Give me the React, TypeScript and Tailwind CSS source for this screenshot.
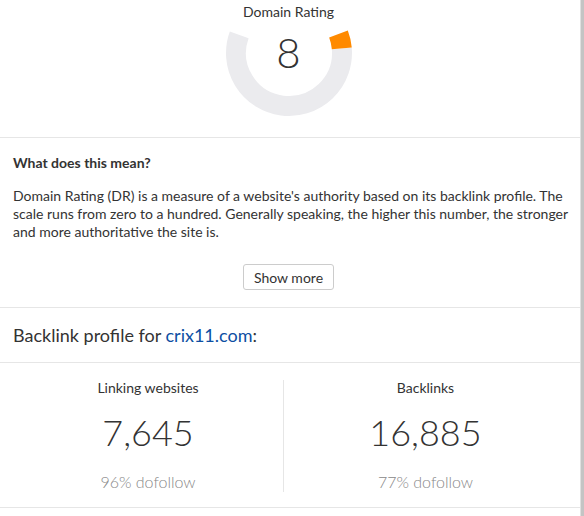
import React from 'react';

function Gauge({ value }: { value: number }) {
  return (
    <div className="relative mx-auto w-[140px] h-[100px]">
      <svg width="140" height="100" viewBox="0 0 140 100">
        <path
          d="M 122.80 28.38 A 53 53 0 1 1 20.20 14.87"
          fill="none"
          stroke="#ebebee"
          strokeWidth="20"
        />
        <path
          d="M 119.48 14.01 A 53 53 0 0 1 122.80 28.38"
          fill="none"
          stroke="#ff8a00"
          strokeWidth="20"
        />
      </svg>
      <div className="absolute left-0 right-0 top-[6px] text-center text-[42px] leading-[52px] font-light text-[#333]">
        {value}
      </div>
    </div>
  );
}

function Stat({ label, value, sub, divider }: { label: string; value: string; sub: string; divider?: boolean }) {
  return (
    <div className={`flex flex-col items-center ${divider ? 'border-l border-[#e6e6e6]' : ''}`}>
      <p className="text-[14px] leading-4 text-[#333]">{label}</p>
      <p className="mt-[14px] text-[36px] leading-[44px] font-light text-[#333]">{value}</p>
      <p className="mt-[18px] text-[16px] leading-5 font-light text-[#888]">{sub}</p>
    </div>
  );
}

export default function App() {
  return (
    <div className="flex w-[584px] h-[516px] bg-white font-['Lato',sans-serif] text-[#333]">
      <div className="w-[580px]">
        <section className="h-[138px] pt-1 pr-[3px] border-b border-[#e6e6e6]">
          <p className="text-center text-[14px] leading-4 text-[#333]">Domain Rating</p>
          <Gauge value={8} />
        </section>

        <section className="h-[170px] px-[13px] pt-[15px] border-b border-[#e6e6e6]">
          <h3 className="text-[14px] leading-5 font-bold text-[#333]">What does this mean?</h3>
          <p className="mt-[14px] whitespace-nowrap text-[14px] leading-[18px] text-[#333]">
            Domain Rating (DR) is a measure of a website's authority based on its backlink profile. The
            <br />
            scale runs from zero to a hundred. Generally speaking, the higher this number, the stronger
            <br />
            and more authoritative the site is.
          </p>
          <div className="mt-[23px] flex justify-center pr-[3px]">
            <button className="h-[26px] w-[91px] rounded-[3px] border border-[#cccccc] bg-white text-[14px] text-[#333]">
              Show more
            </button>
          </div>
        </section>

        <section className="h-[55px] px-[13px] pt-[15px] border-b border-[#e6e6e6]">
          <h2 className="text-[18px] leading-6 text-[#333]">
            Backlink profile for <span className="text-[#0d4fa3]">crix11.com</span>:
          </h2>
        </section>

        <section className="h-[145px] px-[13px] pt-[17px] border-b border-[#e6e6e6]">
          <div className="grid grid-cols-[270px_1fr]">
            <Stat label="Linking websites" value="7,645" sub="96% dofollow" />
            <Stat label="Backlinks" value="16,885" sub="77% dofollow" divider />
          </div>
        </section>
      </div>
      <div className="w-px bg-[#e0e0e0]" />
      <div className="w-[3px] bg-[#c4c4c4]" />
    </div>
  );
}
